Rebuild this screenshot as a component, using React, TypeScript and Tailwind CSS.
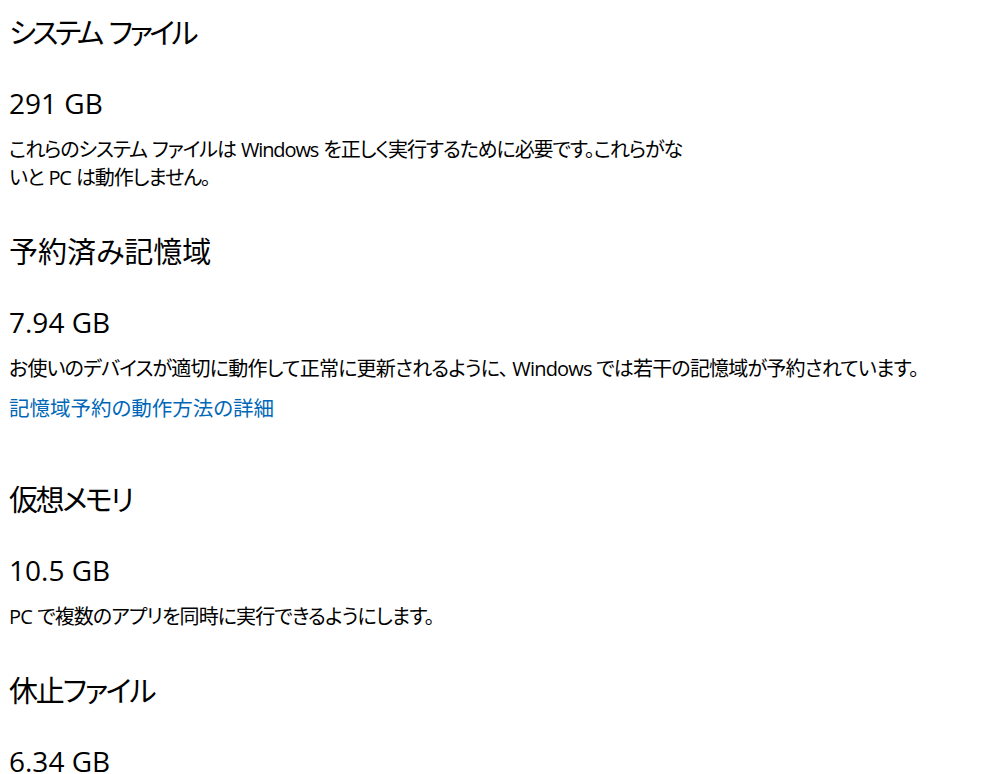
const font = "[font-family:'Segoe_UI','Open_Sans','Noto_Sans_CJK_JP',sans-serif] [font-feature-settings:'palt']";

function Heading({ children, className = '' }: { children: React.ReactNode; className?: string }) {
  return <h2 className={`text-[29px] leading-[40px] text-black font-normal ${className}`}>{children}</h2>;
}

function Size({ children }: { children: React.ReactNode }) {
  return <div className="mt-[30px] text-[28px] leading-[40px] text-black">{children}</div>;
}

function Desc({ children, className = '' }: { children: React.ReactNode; className?: string }) {
  return <p className={`mt-[13px] text-[20px] leading-[28px] text-black ${className}`}>{children}</p>;
}

export default function App() {
  return (
    <div className={`${font} bg-white min-h-[774px] w-[994px] overflow-hidden px-[9px] pt-[13px]`}>
      <section>
        <Heading className="tracking-[-3.5px] [word-spacing:4px]">システム ファイル</Heading>
        <Size>291 GB</Size>
        <Desc className="tracking-[-1.1px] [word-spacing:1px]">
          これらのシステム ファイルは Windows を正しく実行するために必要です。これらがな
          <br />
          いと PC は動作しません。
        </Desc>
      </section>

      <section className="mt-[40px]">
        <Heading>予約済み記憶域</Heading>
        <Size>7.94 GB</Size>
        <Desc className="tracking-[-0.8px]">
          お使いのデバイスが適切に動作して正常に更新されるように、 Windows では若干の記憶域が予約されています。
        </Desc>
        <a href="#" className="mt-[11px] block text-[20.5px] leading-[28px] text-[#0067b8]">
          記憶域予約の動作方法の詳細
        </a>
      </section>

      <section className="mt-[58px]">
        <Heading className="tracking-[-2.4px]">仮想メモリ</Heading>
        <Size>10.5 GB</Size>
        <Desc className="tracking-[-0.9px] [word-spacing:1px]">PC で複数のアプリを同時に実行できるようにします。</Desc>
      </section>

      <section className="mt-[40px]">
        <Heading className="tracking-[-2.2px]">休止ファイル</Heading>
        <Size>6.34 GB</Size>
      </section>
    </div>
  );
}
